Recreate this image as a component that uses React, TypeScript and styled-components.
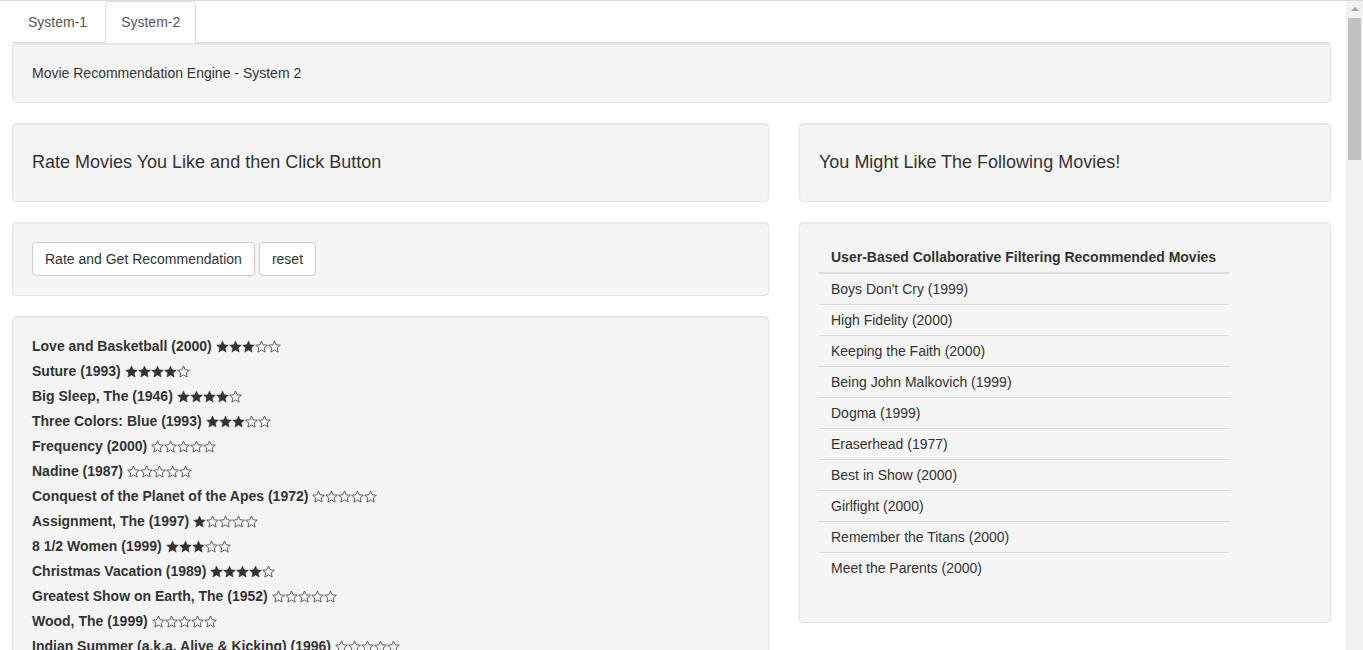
import styled, { createGlobalStyle } from 'styled-components'

const GlobalStyle = createGlobalStyle`
  html, body {
    margin: 0;
    padding: 0;
    background: #fff;
  }
  body {
    font-family: "Liberation Sans", Arial, Helvetica, sans-serif;
    font-size: 14px;
    line-height: 20px;
    color: #333;
    border-top: 1px solid #dcdcdc;
  }
  * {
    box-sizing: border-box;
  }
`

const Page = styled.div`
  padding: 0 32px 0 12px;
`

const Scrollbar = styled.div`
  position: fixed;
  top: 0;
  right: 0;
  width: 17px;
  height: 100vh;
  background: #f1f1f1;
  border-top: 1px solid #dcdcdc;
`

const ScrollArrow = styled.div`
  margin: 6px auto 0;
  width: 0;
  height: 0;
  border-left: 4px solid transparent;
  border-right: 4px solid transparent;
  border-bottom: 4px solid #a3a3a3;
`

const ScrollThumb = styled.div`
  margin: 7px 2px 0;
  height: 142px;
  background: #c1c1c1;
`

const Tabs = styled.ul`
  display: flex;
  list-style: none;
  margin: 0;
  padding: 0;
  border-bottom: 1px solid #ddd;
`

const Tab = styled.li<{ $active?: boolean }>`
  margin-right: 2px;
  margin-bottom: -1px;
  padding: 10px 15px;
  line-height: 20px;
  color: #555;
  border: 1px solid ${(p) => (p.$active ? '#ddd' : 'transparent')};
  border-bottom-color: ${(p) => (p.$active ? '#fff' : 'transparent')};
  border-radius: 4px 4px 0 0;
  background: ${(p) => (p.$active ? '#fff' : 'transparent')};
  cursor: pointer;
`

const Well = styled.div`
  background: #f5f5f5;
  border: 1px solid #e3e3e3;
  border-radius: 4px;
  box-shadow: inset 0 1px 1px rgba(0, 0, 0, 0.05);
  padding: 19px;
  margin-bottom: 20px;
`

const Row = styled.div`
  display: grid;
  grid-template-columns: 757px 532px;
  column-gap: 30px;
  align-items: start;
`

const Column = styled.div`
  display: flex;
  flex-direction: column;
`

const Heading = styled.h4`
  font-size: 18px;
  font-weight: 500;
  line-height: 19px;
  margin: 10px 0;
  color: #333;
`

const ButtonBar = styled.div`
  display: flex;
  gap: 4px;
`

const Button = styled.button`
  font-family: inherit;
  font-size: 14px;
  line-height: 20px;
  color: #333;
  background: #fff;
  border: 1px solid #ccc;
  border-radius: 4px;
  padding: 6px 12px;
  height: 34px;
  cursor: pointer;
`

const MovieList = styled.div`
  display: flex;
  flex-direction: column;
  gap: 5px;
`

const MovieItem = styled.div`
  display: flex;
  align-items: center;
  gap: 4px;
  font-weight: bold;
  line-height: 20px;
`

const Stars = styled.span`
  display: inline-flex;
  align-items: center;
`

const Table = styled.table`
  width: 410px;
  border-collapse: collapse;
  margin-bottom: 20px;
`

const Th = styled.th`
  text-align: left;
  font-weight: bold;
  padding: 5px 12px;
  border-bottom: 2px solid #ddd;
`

const Td = styled.td`
  padding: 5px 12px;
  border-top: 1px solid #ddd;
`

const Star = ({ filled }: { filled: boolean }) => (
  <svg width="13" height="13" viewBox="0 0 24 24">
    <path
      d="M12 1.8l3.1 7.1 7.7.7-5.8 5.1 1.7 7.6L12 18.3l-6.7 4 1.7-7.6L1.2 9.6l7.7-.7z"
      fill={filled ? '#333' : 'none'}
      stroke="#333"
      strokeWidth={filled ? 1 : 1.4}
      strokeLinejoin="round"
    />
  </svg>
)

const movies: [string, number][] = [
  ['Love and Basketball (2000)', 3],
  ['Suture (1993)', 4],
  ['Big Sleep, The (1946)', 4],
  ['Three Colors: Blue (1993)', 3],
  ['Frequency (2000)', 0],
  ['Nadine (1987)', 0],
  ['Conquest of the Planet of the Apes (1972)', 0],
  ['Assignment, The (1997)', 1],
  ['8 1/2 Women (1999)', 3],
  ['Christmas Vacation (1989)', 4],
  ['Greatest Show on Earth, The (1952)', 0],
  ['Wood, The (1999)', 0],
  ['Indian Summer (a.k.a. Alive & Kicking) (1996)', 0],
]

const recommended = [
  "Boys Don't Cry (1999)",
  'High Fidelity (2000)',
  'Keeping the Faith (2000)',
  'Being John Malkovich (1999)',
  'Dogma (1999)',
  'Eraserhead (1977)',
  'Best in Show (2000)',
  'Girlfight (2000)',
  'Remember the Titans (2000)',
  'Meet the Parents (2000)',
]

const App = () => {
  return (
    <>
      <GlobalStyle />
      <Scrollbar>
        <ScrollArrow />
        <ScrollThumb />
      </Scrollbar>
      <Page>
        <Tabs>
          <Tab>System-1</Tab>
          <Tab $active>System-2</Tab>
        </Tabs>
        <Well>Movie Recommendation Engine - System 2</Well>
        <Row>
          <Column>
            <Well>
              <Heading>Rate Movies You Like and then Click Button</Heading>
            </Well>
            <Well>
              <ButtonBar>
                <Button>Rate and Get Recommendation</Button>
                <Button>reset</Button>
              </ButtonBar>
            </Well>
            <Well>
              <MovieList>
                {movies.map(([title, rating]) => (
                  <MovieItem key={title}>
                    {title}
                    <Stars>
                      {Array.from({ length: 5 }).map((_, i) => (
                        <Star key={i} filled={i < rating} />
                      ))}
                    </Stars>
                  </MovieItem>
                ))}
              </MovieList>
            </Well>
          </Column>
          <Column>
            <Well>
              <Heading>You Might Like The Following Movies!</Heading>
            </Well>
            <Well>
              <Table>
                <thead>
                  <tr>
                    <Th>User-Based Collaborative Filtering Recommended Movies</Th>
                  </tr>
                </thead>
                <tbody>
                  {recommended.map((m) => (
                    <tr key={m}>
                      <Td>{m}</Td>
                    </tr>
                  ))}
                </tbody>
              </Table>
            </Well>
          </Column>
        </Row>
      </Page>
    </>
  )
}

export default App
